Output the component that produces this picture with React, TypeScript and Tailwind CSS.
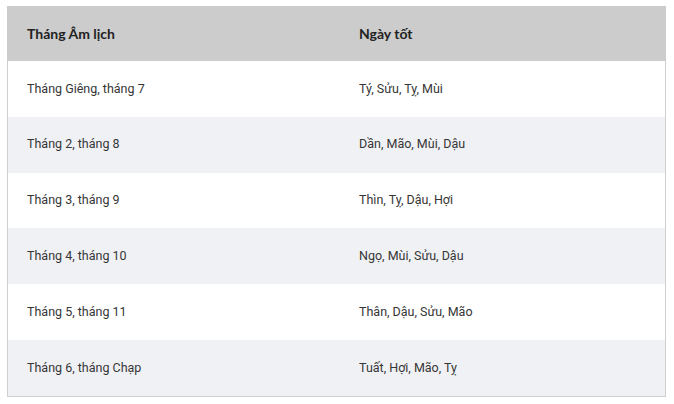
const ROWS: [string, string][] = [
  ['Tháng Giêng, tháng 7', 'Tý, Sửu, Tỵ, Mùi'],
  ['Tháng 2, tháng 8', 'Dần, Mão, Mùi, Dậu'],
  ['Tháng 3, tháng 9', 'Thìn, Tỵ, Dậu, Hợi'],
  ['Tháng 4, tháng 10', 'Ngọ, Mùi, Sửu, Dậu'],
  ['Tháng 5, tháng 11', 'Thân, Dậu, Sửu, Mão'],
  ['Tháng 6, tháng Chạp', 'Tuất, Hợi, Mão, Tỵ'],
];

export default function App() {
  return (
    <div className="w-[674px] h-[404px] bg-white pt-[6px] pl-[7px]">
      <div className="w-[659px] border-x border-b border-[#cfcfcf]">
        <div className="grid grid-cols-[331px_1fr] h-[55px] items-center bg-[#cccccc] -mx-px font-['Lato',sans-serif] font-bold text-[14px] text-[#222]">
          <div className="pl-[20px]">Tháng Âm lịch</div>
          <div className="pl-[21px]">Ngày tốt</div>
        </div>
        {ROWS.map(([month, days], i) => (
          <div
            key={i}
            className={`grid grid-cols-[331px_1fr] h-[55.8px] items-center font-['Roboto',sans-serif] text-[12.5px] text-[#363636] ${
              i % 2 === 1 ? 'bg-[#f0f1f4]' : 'bg-white'
            }`}
          >
            <div className="pl-[19px]">{month}</div>
            <div className="pl-[20px]">{days}</div>
          </div>
        ))}
      </div>
    </div>
  );
}
